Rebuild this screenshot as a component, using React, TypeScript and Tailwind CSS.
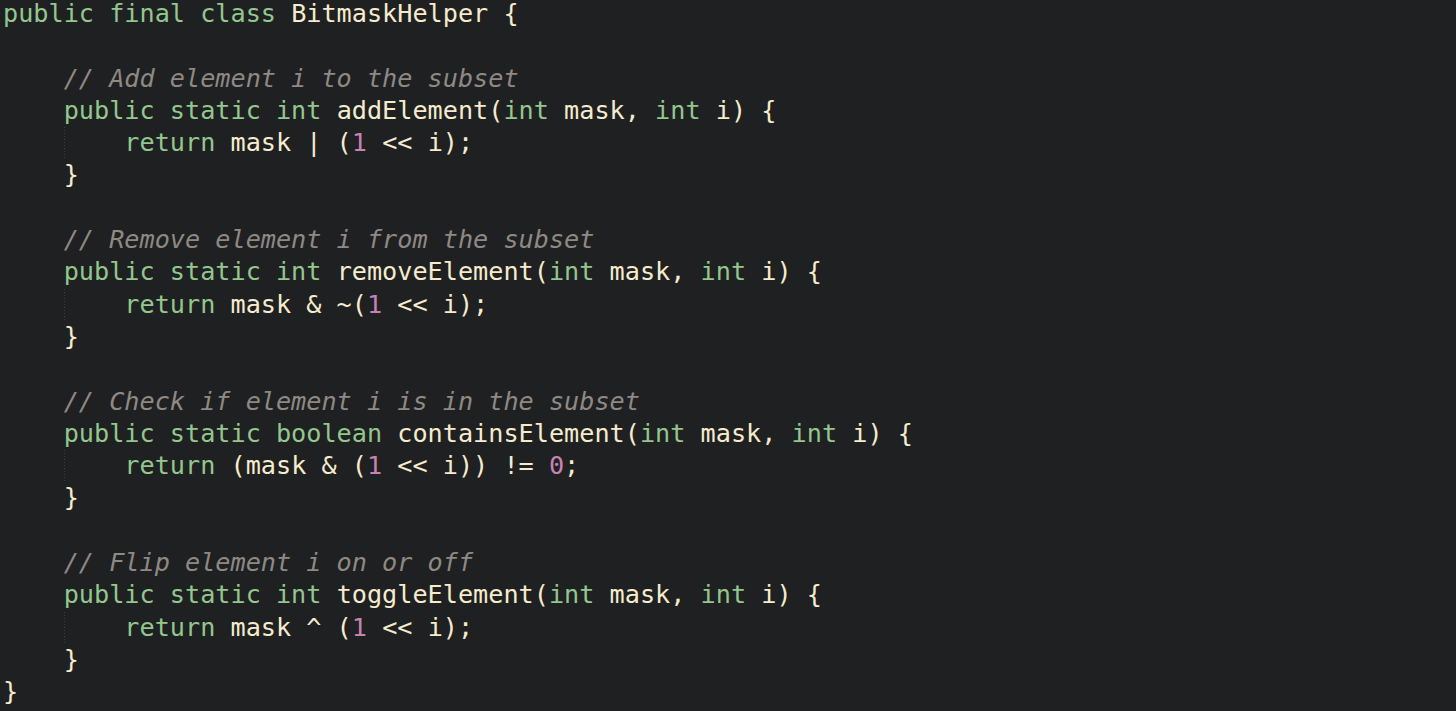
import React from "react";

type Tok = [string, "k" | "t" | "n" | "c"];

const K = (s: string): Tok => [s, "k"];
const T = (s: string): Tok => [s, "t"];
const N = (s: string): Tok => [s, "n"];
const C = (s: string): Tok => [s, "c"];

type Line = { indent: number; toks: Tok[]; guide?: boolean };

const lines: Line[] = [
  { indent: 0, toks: [K("public final class "), T("BitmaskHelper {")] },
  { indent: 0, toks: [] },
  { indent: 1, toks: [C("// Add element i to the subset")] },
  { indent: 1, toks: [K("public static int "), T("addElement("), K("int "), T("mask, "), K("int "), T("i) {")] },
  { indent: 2, guide: true, toks: [K("return "), T("mask | ("), N("1"), T(" << i);")] },
  { indent: 1, toks: [T("}")] },
  { indent: 0, toks: [] },
  { indent: 1, toks: [C("// Remove element i from the subset")] },
  { indent: 1, toks: [K("public static int "), T("removeElement("), K("int "), T("mask, "), K("int "), T("i) {")] },
  { indent: 2, guide: true, toks: [K("return "), T("mask & ~("), N("1"), T(" << i);")] },
  { indent: 1, toks: [T("}")] },
  { indent: 0, toks: [] },
  { indent: 1, toks: [C("// Check if element i is in the subset")] },
  { indent: 1, toks: [K("public static boolean "), T("containsElement("), K("int "), T("mask, "), K("int "), T("i) {")] },
  { indent: 2, guide: true, toks: [K("return "), T("(mask & ("), N("1"), T(" << i)) != "), N("0"), T(";")] },
  { indent: 1, toks: [T("}")] },
  { indent: 0, toks: [] },
  { indent: 1, toks: [C("// Flip element i on or off")] },
  { indent: 1, toks: [K("public static int "), T("toggleElement("), K("int "), T("mask, "), K("int "), T("i) {")] },
  { indent: 2, guide: true, toks: [K("return "), T("mask ^ ("), N("1"), T(" << i);")] },
  { indent: 1, toks: [T("}")] },
  { indent: 0, toks: [T("}")] },
];

function TokSpan({ tok }: { tok: Tok }) {
  const [s, kind] = tok;
  if (kind === "k") return <span className="text-[#93c78d]">{s}</span>;
  if (kind === "n") return <span className="text-[#c982b4]">{s}</span>;
  if (kind === "c") return <span className="italic text-[#8f8983]">{s}</span>;
  return <span className="text-[#f6ebcd]">{s}</span>;
}

export default function App() {
  return (
    <div className="w-[1456px] h-[711px] overflow-hidden bg-[#1e2022]">
      <pre
        className="m-0 pl-[3px] pt-0 -mt-[2px] text-[25.2px] leading-[32.3px] text-[#f6ebcd] whitespace-pre"
        style={{ fontFamily: '"DejaVu Sans Mono", "Liberation Mono", monospace' }}
      >
        {lines.map((ln, i) => (
          <div key={i} className="h-[32.3px] flex">
            {ln.indent >= 1 && <span className="inline-block w-[4ch]" />}
            {ln.indent >= 2 && (
              <span className="inline-block w-[4ch] h-[32.3px] bg-[linear-gradient(to_bottom,#3c3d41_50%,transparent_50%)] bg-[length:1px_3px] bg-repeat-y" />
            )}
            <span>
              {ln.toks.map((t, j) => (
                <TokSpan key={j} tok={t} />
              ))}
            </span>
          </div>
        ))}
      </pre>
    </div>
  );
}
